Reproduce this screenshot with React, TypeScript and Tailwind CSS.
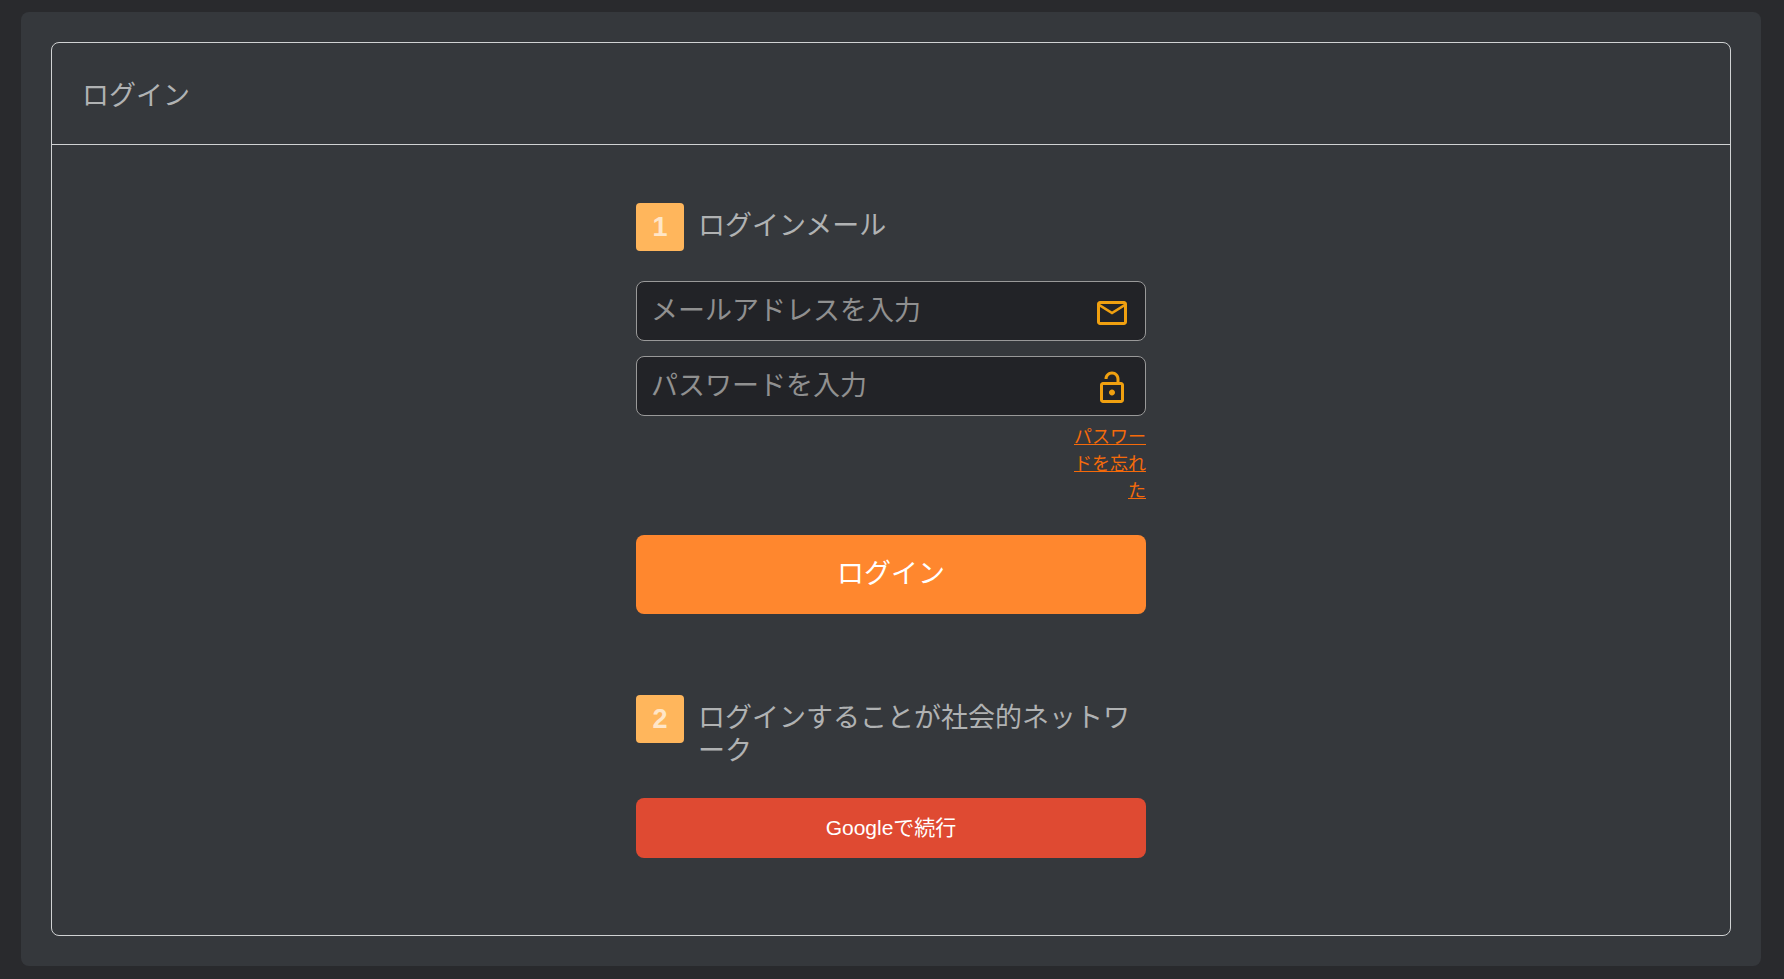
import React, { useState } from 'react';
import { MdMailOutline, MdOutlineLockOpen } from 'react-icons/md';

interface StepTitleProps {
    step: number;
    children: React.ReactNode;
}

const StepTitle: React.FC<StepTitleProps> = ({ step, children }) => (
    <div className="flex items-start gap-3.5">
        <span className="flex size-12 shrink-0 items-center justify-center rounded bg-[#ffb65c] text-[27px] font-bold text-[#ffe6c8]">
            {step}
        </span>
        <h2 className="pt-[7px] text-[27px] leading-[33px] text-[#b0b2b3]">{children}</h2>
    </div>
);

interface FieldProps {
    id: string;
    type: string;
    label: string;
    value: string;
    onChange: (value: string) => void;
    icon: React.ReactNode;
}

const Field: React.FC<FieldProps> = ({ id, type, label, value, onChange, icon }) => (
    <div className="flex h-[60px] items-center rounded-lg border border-[#999999] bg-[#222327] pl-3.5 pr-[15px]">
        <input
            id={id}
            type={type}
            value={value}
            onChange={(e) => onChange(e.target.value)}
            placeholder={label}
            aria-label={label}
            className="h-full min-w-0 flex-1 bg-transparent text-[27px] text-[#b0b2b3] outline-none placeholder:text-[#909090]"
        />
        <span className="pt-[3px]">{icon}</span>
    </div>
);

export default function App() {
    const [email, setEmail] = useState('');
    const [password, setPassword] = useState('');

    return (
        <div className="flex min-h-screen flex-col bg-[#292a2d] pb-[13px] pl-[21px] pr-[23px] pt-3 font-['Liberation_Sans','Noto_Sans_CJK_JP',sans-serif]">
            <main className="flex flex-1 flex-col rounded-lg bg-[#35383c] p-[30px]">
                <section className="flex-1 rounded-lg border border-[#d0d2d3]">
                    <header className="border-b border-[#d0d2d3] px-[30px] pb-[31px] pt-[37px]">
                        <h1 className="text-[27px] leading-[33px] text-[#b0b2b3]">ログイン</h1>
                    </header>

                    <div className="mx-auto w-full max-w-[510px] pb-[76px] pt-[58px]">
                        <form onSubmit={(e) => e.preventDefault()}>
                            <StepTitle step={1}>ログインメール</StepTitle>

                            <div className="mt-[30px] flex flex-col gap-[15px]">
                                <Field
                                    id="email"
                                    type="email"
                                    label="メールアドレスを入力"
                                    value={email}
                                    onChange={setEmail}
                                    icon={<MdMailOutline className="size-9 text-[#f0a010]" />}
                                />
                                <Field
                                    id="password"
                                    type="password"
                                    label="パスワードを入力"
                                    value={password}
                                    onChange={setPassword}
                                    icon={<MdOutlineLockOpen className="size-9 text-[#f0a010]" />}
                                />
                            </div>

                            <div className="flex justify-end pt-2">
                                <a
                                    href="#"
                                    className="w-[72px] text-right text-[18px] leading-[27px] text-[#f56a0a] underline"
                                >
                                    パスワードを忘れた
                                </a>
                            </div>

                            <button
                                type="submit"
                                className="mt-[30px] h-[79px] w-full rounded-lg bg-[#ff872e] text-[27px] text-white"
                            >
                                ログイン
                            </button>
                        </form>

                        {/* Social login */}
                        <div className="mt-[81px]">
                            <StepTitle step={2}>ログインすることが社会的ネットワーク</StepTitle>
                            <button
                                type="button"
                                className="mt-[30px] h-[60px] w-full rounded-lg bg-[#df4a32] text-[21px] text-white"
                            >
                                Googleで続行
                            </button>
                        </div>
                    </div>
                </section>
            </main>
        </div>
    );
}
